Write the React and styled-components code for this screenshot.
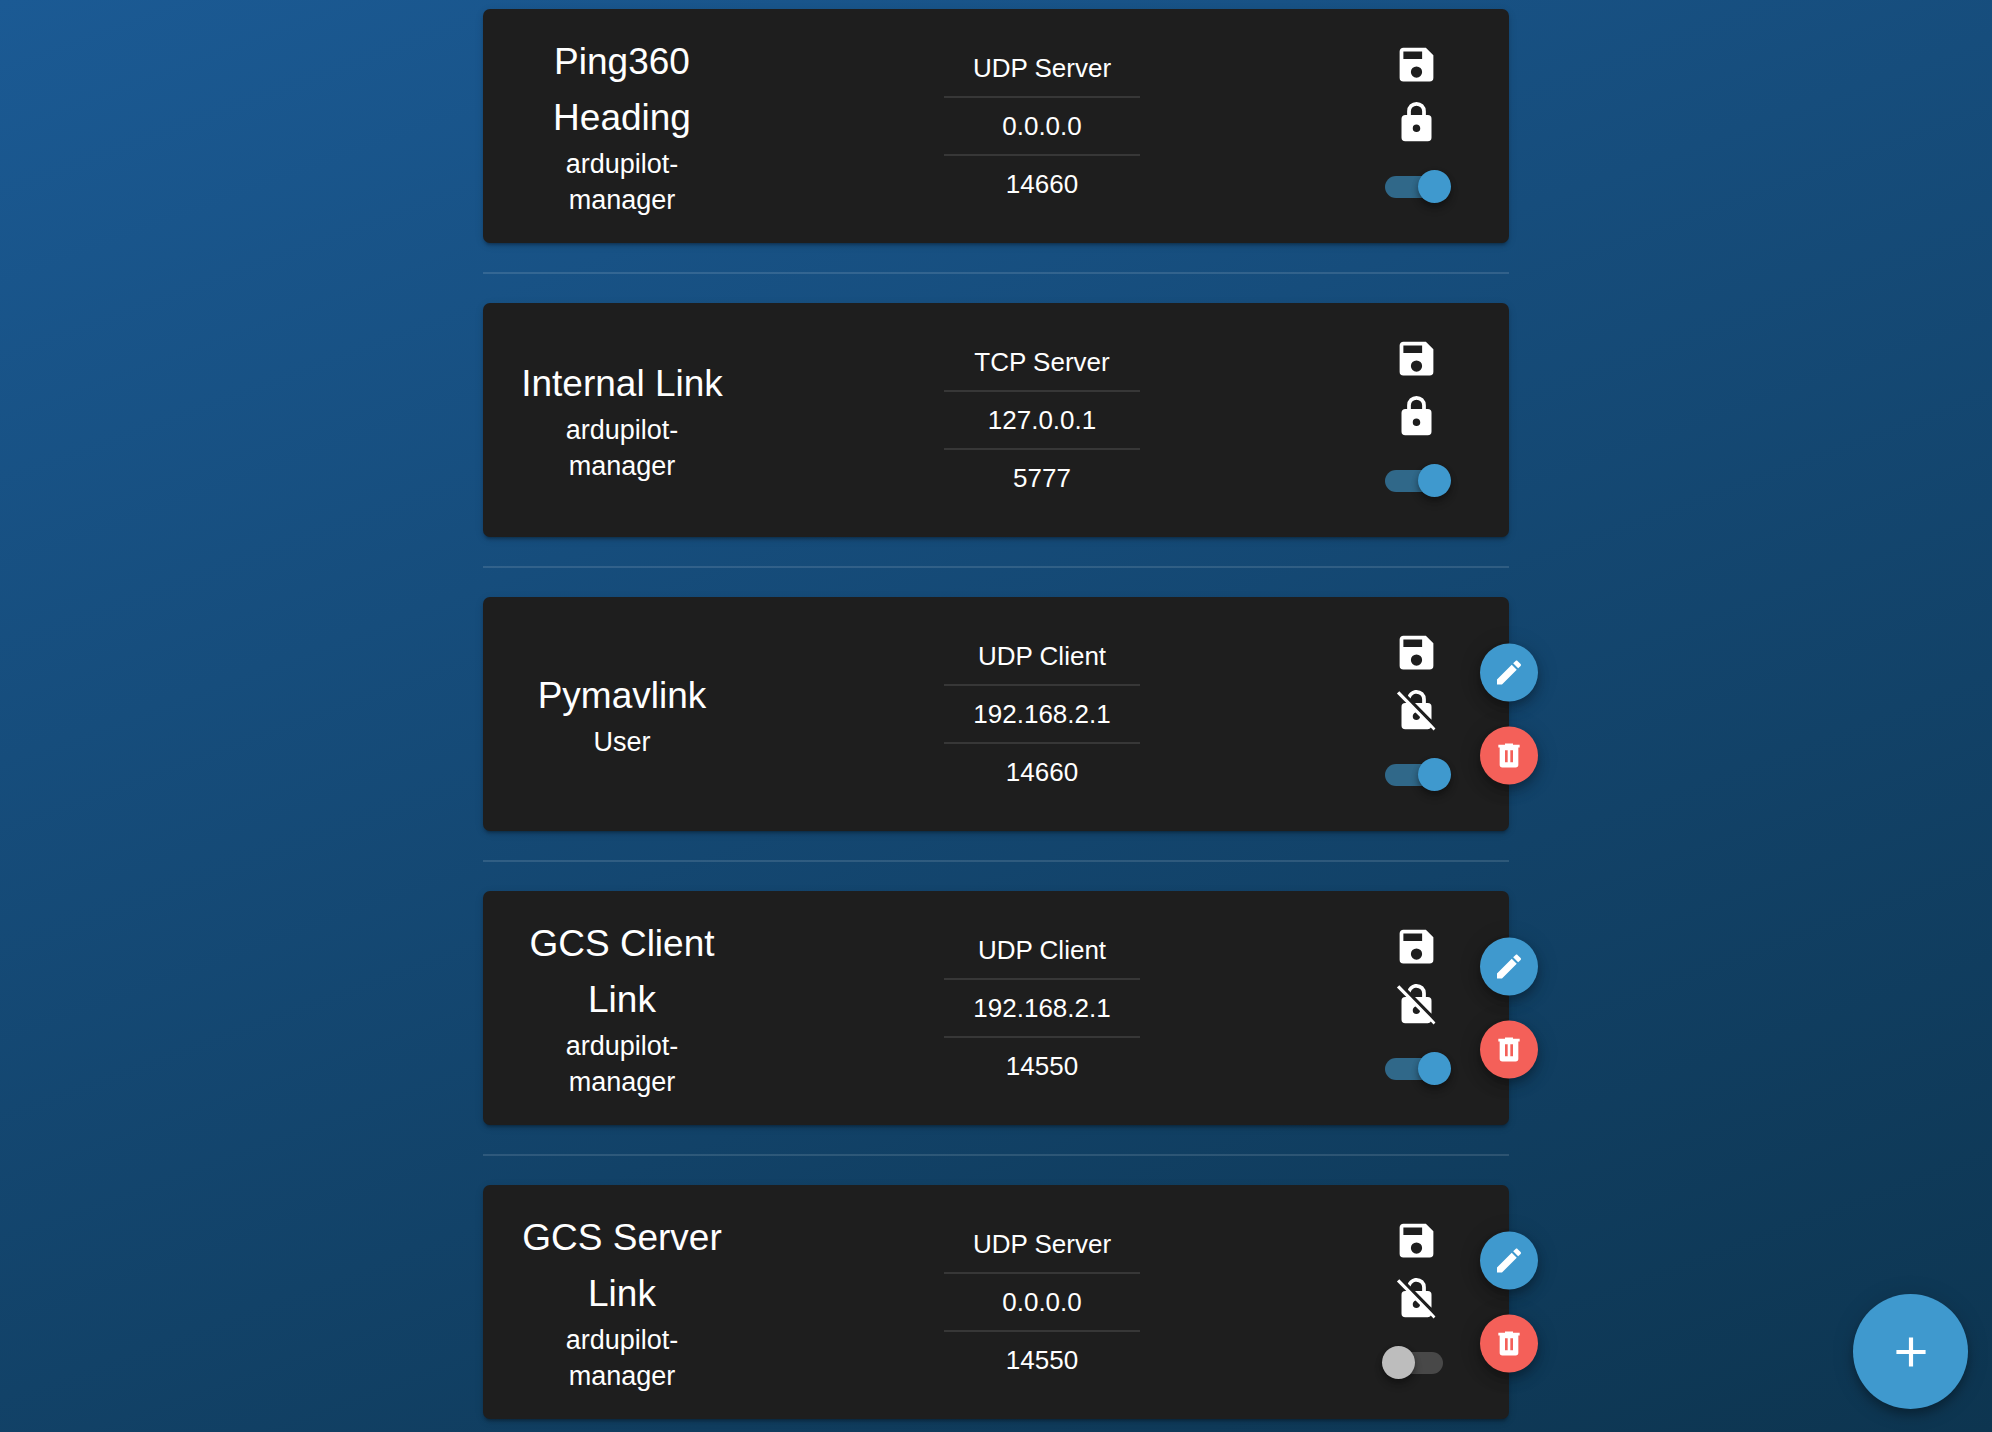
import React, { useState } from "react";
import styled, { createGlobalStyle } from "styled-components";

const ICONS = {
  save: "M15,9H5V5H15M12,19A3,3 0 0,1 9,16A3,3 0 0,1 12,13A3,3 0 0,1 15,16A3,3 0 0,1 12,19M17,3H5C3.89,3 3,3.9 3,5V19A2,2 0 0,0 5,21H19A2,2 0 0,0 21,19V7L17,3Z",
  lock: "M12,17A2,2 0 0,0 14,15C14,13.89 13.1,13 12,13A2,2 0 0,0 10,15A2,2 0 0,0 12,17M18,8A2,2 0 0,1 20,10V20A2,2 0 0,1 18,22H6A2,2 0 0,1 4,20V10C4,8.89 4.9,8 6,8H7V6A5,5 0 0,1 12,1A5,5 0 0,1 17,6V8H18M12,3A3,3 0 0,0 9,6V8H15V6A3,3 0 0,0 12,3Z",
  unlocked:
    "M2.83,1.7L1.56,2.97L6.59,8H6A2,2 0 0,0 4,10V20A2,2 0 0,0 6,22H18C18.7,22 19.3,21.7 19.6,21.1L21.1,22.6L22.1,21.6L20,19.3L2.83,1.7M12,17A2,2 0 0,1 10,15C10,14.1 10.6,13.3 11.5,13L13.9,15.4C13.7,16.3 12.9,17 12,17M20,16.9V10A2,2 0 0,0 18,8H17V6A5,5 0 0,0 12,1C9.9,1 8.1,2.3 7.4,4.1L8.9,5.6C9.1,4.1 10.4,3 12,3A3,3 0 0,1 15,6V8H11.2L20,16.9Z",
  pencil:
    "M20.71,7.04C21.1,6.65 21.1,6 20.71,5.63L18.37,3.29C18,2.9 17.35,2.9 16.96,3.29L15.12,5.12L18.87,8.87M3,17.25V21H6.75L17.81,9.93L14.06,6.18L3,17.25Z",
  trash:
    "M9,3V4H4V6H5V19A2,2 0 0,0 7,21H17A2,2 0 0,0 19,19V6H20V4H15V3H9M9,8H11V17H9V8M13,8H15V17H13V8Z",
  plus: "M19,13H13V19H11V13H5V11H11V5H13V11H19V13Z",
};

const ENDPOINTS = [
  { name: "Ping360 Heading", owner: "ardupilot-manager", type: "UDP Server", place: "0.0.0.0", port: 14660, locked: true, enabled: true },
  { name: "Internal Link", owner: "ardupilot-manager", type: "TCP Server", place: "127.0.0.1", port: 5777, locked: true, enabled: true },
  { name: "Pymavlink", owner: "User", type: "UDP Client", place: "192.168.2.1", port: 14660, locked: false, enabled: true },
  { name: "GCS Client Link", owner: "ardupilot-manager", type: "UDP Client", place: "192.168.2.1", port: 14550, locked: false, enabled: true },
  { name: "GCS Server Link", owner: "ardupilot-manager", type: "UDP Server", place: "0.0.0.0", port: 14550, locked: false, enabled: false },
];

const GlobalStyle = createGlobalStyle`
  *, *::before, *::after { box-sizing: border-box; }
  html { min-height: 100%; background: linear-gradient(160deg, #1b5a94 0%, #0d3550 100%) no-repeat fixed; }
  body {
    margin: 0;
    color: #fff;
    font-family: "Liberation Sans", Arial, sans-serif;
    font-size: 26px;
  }
`;

const Page = styled.main`
  padding: 9px 24px 12px;
`;

const List = styled.ul`
  list-style: none;
  margin: 0 auto;
  padding: 0;
  max-width: 1026px;
`;

const Item = styled.li`
  & + & {
    margin-top: 29px;
    padding-top: 29px;
    border-top: 2px solid rgba(255, 255, 255, 0.12);
  }
`;

const Card = styled.article`
  position: relative;
  display: grid;
  grid-template-columns: 278px 1fr 186px;
  align-items: center;
  background: #1e1e1e;
  border-radius: 7px;
  box-shadow: 0 4px 2px -3px rgba(0, 0, 0, 0.2), 0 3px 3px rgba(0, 0, 0, 0.14),
    0 2px 8px rgba(0, 0, 0, 0.12);
`;

const Identity = styled.header`
  padding: 0 34px;
  text-align: center;
`;

const Name = styled.h2`
  margin: 0;
  font-size: 37px;
  font-weight: 400;
  line-height: 56px;
`;

const Owner = styled.p`
  margin: 0;
  font-size: 27px;
  line-height: 36px;
`;

const Details = styled.ul`
  list-style: none;
  justify-self: center;
  width: 196px;
  margin: 0;
  padding: 0;
  text-align: center;
`;

const Detail = styled.li`
  line-height: 56px;

  & + & {
    border-top: 2px solid #373737;
  }
`;

const Status = styled.div`
  display: flex;
  flex-direction: column;
  align-items: center;
  gap: 13px;
  padding: 33px 0 40px;
`;

const Svg = styled.svg`
  display: block;
  width: ${(p) => p.$size}px;
  height: ${(p) => p.$size}px;
  fill: currentColor;
`;

const Switch = styled.input`
  appearance: none;
  display: flex;
  align-items: center;
  width: 68px;
  height: 33px;
  margin: 12px 0 0;
  cursor: pointer;

  &::before {
    content: "";
    flex: none;
    width: 58px;
    height: 22px;
    margin-left: 3px;
    border-radius: 11px;
    background: #484848;
  }

  &::after {
    content: "";
    flex: none;
    width: 33px;
    height: 33px;
    margin-left: -61px;
    border-radius: 50%;
    background: #bdbdbd;
    box-shadow: 0 3px 6px rgba(0, 0, 0, 0.3), 0 6px 8px rgba(0, 0, 0, 0.16);
  }

  &:checked::before {
    background: #306889;
  }

  &:checked::after {
    margin-left: -25px;
    background: #3f99ce;
  }
`;

const Actions = styled.div`
  position: absolute;
  top: 50%;
  right: 0;
  transform: translate(50%, -50%);
  display: grid;
  gap: 25px;
`;

const RoundButton = styled.button`
  display: grid;
  place-items: center;
  width: ${(p) => (p.$large ? 115 : 58)}px;
  height: ${(p) => (p.$large ? 115 : 58)}px;
  padding: 0;
  border: 0;
  border-radius: 50%;
  color: #fff;
  background: ${(p) => (p.$danger ? "#f46059" : "#3f99ce")};
  box-shadow: 0 5px 8px -1px rgba(0, 0, 0, 0.2), 0 8px 14px rgba(0, 0, 0, 0.14),
    0 2px 24px rgba(0, 0, 0, 0.12);
  cursor: pointer;
`;

const AddCorner = styled.div`
  position: fixed;
  right: 24px;
  bottom: 23px;
`;

function Icon({ name, size, label }) {
  const a11y = label ? { role: "img", "aria-label": label } : { "aria-hidden": true };
  return (
    <Svg viewBox="0 0 24 24" $size={size} {...a11y}>
      <path d={ICONS[name]} />
    </Svg>
  );
}

function EndpointCard({ endpoint }) {
  const [enabled, setEnabled] = useState(endpoint.enabled);
  return (
    <Card>
      <Identity>
        <Name>{endpoint.name}</Name>
        <Owner>{endpoint.owner}</Owner>
      </Identity>
      <Details>
        <Detail>{endpoint.type}</Detail>
        <Detail>{endpoint.place}</Detail>
        <Detail>{endpoint.port}</Detail>
      </Details>
      <Status>
        <Icon name="save" size={45} label="Persistent" />
        <Icon
          name={endpoint.locked ? "lock" : "unlocked"}
          size={45}
          label={endpoint.locked ? "Protected" : "Not protected"}
        />
        <Switch
          type="checkbox"
          role="switch"
          aria-label={`Enable ${endpoint.name}`}
          checked={enabled}
          onChange={(e) => setEnabled(e.target.checked)}
        />
      </Status>
      {!endpoint.locked && (
        <Actions>
          <RoundButton type="button" aria-label={`Edit ${endpoint.name}`}>
            <Icon name="pencil" size={32} />
          </RoundButton>
          <RoundButton type="button" $danger aria-label={`Delete ${endpoint.name}`}>
            <Icon name="trash" size={32} />
          </RoundButton>
        </Actions>
      )}
    </Card>
  );
}

export default function App() {
  return (
    <>
      <GlobalStyle />
      <Page>
        <List>
          {ENDPOINTS.map((endpoint) => (
            <Item key={endpoint.name}>
              <EndpointCard endpoint={endpoint} />
            </Item>
          ))}
        </List>
      </Page>
      <AddCorner>
        <RoundButton type="button" $large aria-label="Add endpoint">
          <Icon name="plus" size={50} />
        </RoundButton>
      </AddCorner>
    </>
  );
}
